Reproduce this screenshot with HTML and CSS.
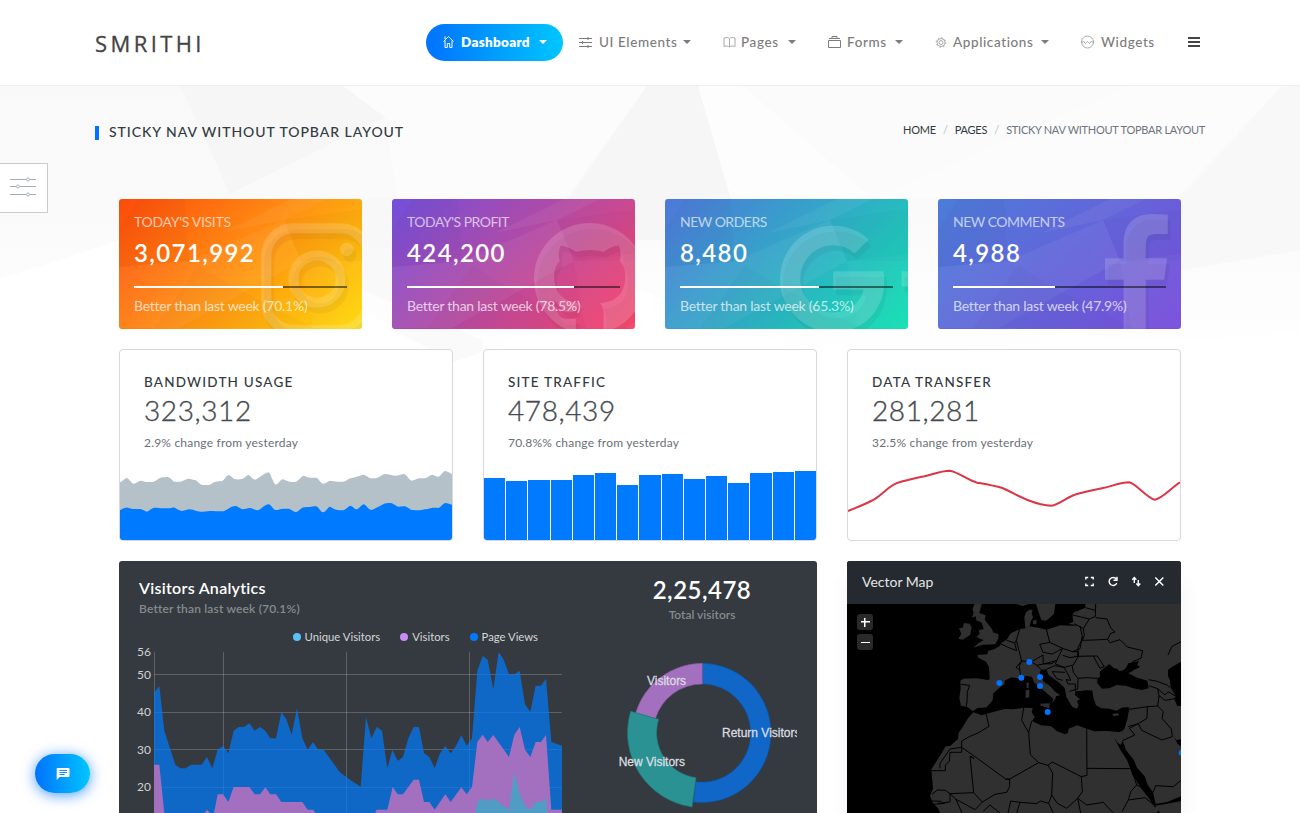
FILE: index.html
```html
<!DOCTYPE html>
<html lang="en">
<head>
<meta charset="utf-8">
<title>Smrithi Dashboard</title>
<link rel="stylesheet" href="styles.css">
</head>
<body>
<svg width="0" height="0" class="defs">
  <defs>
    <g id="facets">
      <path fill="#fff" fill-opacity=".05" d="M103 34L172 0H208L165 21ZM70 62L165 21L182 62L60 129H0V68Z"/>
      <path fill="#000" fill-opacity=".02" d="M0 30L20 0H66L70 62L0 68ZM165 21L243 10V62L182 62ZM35 129L80 66L110 85L195 129Z"/>
      <path fill="#fff" fill-opacity=".03" d="M182 62L243 55V129H193Z"/>
    </g>
    <path id="github" d="M896 128q209 0 385.500 103t279.500 279.500 103 385.500q0 251-146.500 451.500t-378.500 277.500q-27 5-40-7t-13-30q0-3 .5-76.500t.5-134.500q0-97-52-142 57-6 102.500-18t94-39 81-66.500 53-105 20.500-150.500q0-119-79-206 37-91-8-204-28-9-81 11t-92 44l-38 24q-93-26-192-26t-192 26q-16-11-42.500-27t-83.500-38.500-85-13.500q-45 113-8 204-79 87-79 206 0 85 20.500 150t52.500 105 80.500 67 94 39 102.500 18q-39 36-49 103-21 10-45 15t-57 5-65.500-21.500-55.500-62.500q-19-32-48.500-52t-49.500-24l-20-3q-21 0-29 4.500t-5 11.500 9 14 13 12l7 5q22 10 43.500 38t31.500 51l10 23q13 38 44 61.500t67 30 69.500 7 55.500-3.500l23-4q0 38 .5 88.500t.5 54.500q0 18-13 30t-40 7q-232-77-378.500-277.500t-146.500-451.500q0-209 103-385.500t279.500-279.500 385.500-103z"/>
    <path id="gplus" d="M1437 913q0 208-87 370.500t-248 254-369 91.500q-149 0-285-58t-234-156-156-234-58-285 58-285 156-234 234-156 285-58q286 0 491 192l-199 191q-117-113-292-113-123 0-227.500 62t-165.500 168.500-61 232.500 61 232.500 165.500 168.500 227.500 62q83 0 152.500-23t114.500-57.500 78.500-78.500 49-83 21.500-74h-416v-252h692q12 63 12 122zm867-122v210h-209v209h-210v-209h-209v-210h209v-209h210v209h209z"/>
    <path id="fb" d="M1343 12v264h-157q-86 0-116 36t-30 108v189h293l-39 296h-254v759h-306v-759h-255v-296h255v-218q0-186 104-288.500t277-102.500q147 0 228 12z"/>
    <g id="insta"><rect x="5" y="5" width="101.400" height="101.400" rx="27" fill="none" stroke="currentColor" stroke-width="10"/><circle cx="55.700" cy="55.700" r="23.600" fill="none" stroke="currentColor" stroke-width="10"/><circle cx="85.500" cy="26" r="6.800"/></g>
  </defs>
</svg>

<header class="topnav">
  <div class="wrap nav-row">
    <a class="brand">SMRITHI</a>
    <nav class="menu">
      <a class="item i-dash active"><svg class="ic" viewBox="0 0 12 14"><path d="M1 6.500L6 1.500L11 6.500M2.500 5.500V12.500H4.800V8.500H7.200V12.500H9.500V5.500M2.500 4V1.500"/></svg><span class="tx">Dashboard</span><i class="caret"></i></a>
      <a class="item i-ui"><svg class="ic" viewBox="0 0 13 14"><path d="M0 3.500H13M0 7.500H13M0 11.500H13M9 2V5M3.500 6V9M9 10V13"/></svg><span class="tx">UI Elements</span><i class="caret"></i></a>
      <a class="item i-pages"><svg class="ic thin" viewBox="0 0 12 14"><path d="M6 4V12M6 3.500C5 2.300 2 2.300.5 3V11.500C2 10.800 5 10.800 6 12C7 10.800 10 10.800 11.500 11.500V3C10 2.300 7 2.300 6 3.500"/></svg><span class="tx">Pages</span><i class="caret"></i></a>
      <a class="item i-forms"><svg class="ic" viewBox="0 0 13 14"><path d="M.5 5.500H12.500V12.500H.5ZM1 3.500H12M4 3V1.500H9V3"/></svg><span class="tx">Forms</span><i class="caret"></i></a>
      <a class="item i-apps"><svg class="ic thin" viewBox="0 0 12 14"><circle cx="5.500" cy="7.500" r="4"/><circle cx="5.500" cy="7.500" r="2"/><circle cx="5.500" cy="7.500" r="4.800" stroke-dasharray="1.500 2.270"/></svg><span class="tx">Applications</span><i class="caret"></i></a>
      <a class="item i-wid"><svg class="ic thin" viewBox="0 0 13 14"><circle cx="6.500" cy="7" r="6"/><path d="M.7 8L2.500 6L4.500 8.500L6.500 6.500L8.500 8.500L10.500 6L12.300 8"/></svg><span class="tx">Widgets</span></a>
      <a class="burger"><i></i><i></i><i></i></a>
    </nav>
  </div>
</header>

<main class="page">
  <svg class="backdrop" viewBox="0 86 1300 290" preserveAspectRatio="none">
    <defs><linearGradient id="fade" x1="0" y1="0" x2="0" y2="1"><stop offset="0" stop-color="#f9f9f9"/><stop offset=".45" stop-color="#fafafa"/><stop offset="1" stop-color="#fff"/></linearGradient></defs>
    <path fill="url(#fade)" d="M0 86H1300V334L1180 340L800 350L640 290L454 362L360 310L119 240L0 279Z"/>
    <path fill="#f6f6f6" d="M181 86H343L385 117L230 194Z"/>
    <path fill="#fcfcfc" d="M343 86H647L565 199H398L385 117Z"/>
    <path fill="#f6f6f6" d="M647 86H698L731 199L740 240H540Z"/>
    <path fill="#fdfdfd" d="M698 86H743L873 199H731Z"/>
    <path fill="#fbfbfb" d="M743 86H1130L873 199Z"/>
    <path fill="#fcfcfc" d="M1130 86H1282L1175 199H873Z"/>
    <path fill="#f8f8f8" d="M1282 86H1300V250L1181 270V199Z"/>
    <path fill="#f7f7f7" d="M362 199H392V329L453 362L483 352V340L362 290Z" fill-opacity=".6"/>
  </svg>

  <div class="wrap title-row">
    <h1 class="page-title">STICKY NAV WITHOUT TOPBAR LAYOUT</h1>
    <div class="crumbs"><a class="c1">HOME</a><span class="sl">/</span><a class="c2">PAGES</a><span class="sl">/</span><span class="c3">STICKY NAV WITHOUT TOPBAR LAYOUT</span></div>
  </div>

  <div class="content">
    <section class="row tiles">
      <article class="tile t1">
        <svg class="art" viewBox="0 0 243 130"><use href="#facets"/><g transform="translate(142.300 24.300)"><use href="#insta" transform="translate(3 6)" class="sh"/><use href="#insta" class="hi"/></g></svg>
        <h2>TODAY'S VISITS</h2><strong>3,071,992</strong>
        <div class="bar"><i style="width:70.1%"></i></div><p>Better than last week (70.1%)</p>
      </article>
      <article class="tile t2">
        <svg class="art" viewBox="0 0 243 130"><use href="#facets"/><g transform="translate(132.700 14.700) scale(.07254)"><use href="#github" transform="translate(40 80)" class="sh"/><use href="#github" class="hi"/></g></svg>
        <h2>TODAY'S PROFIT</h2><strong>424,200</strong>
        <div class="bar"><i style="width:78.5%"></i></div><p>Better than last week (78.5%)</p>
      </article>
      <article class="tile t3">
        <svg class="art" viewBox="0 0 243 130"><use href="#facets"/><g transform="translate(115 14.900) scale(.07254)"><use href="#gplus" transform="translate(40 80)" class="sh"/><use href="#gplus" class="hi"/></g></svg>
        <h2>NEW ORDERS</h2><strong>8,480</strong>
        <div class="bar"><i style="width:65.3%"></i></div><p>Better than last week (65.3%)</p>
      </article>
      <article class="tile t4">
        <svg class="art" viewBox="0 0 243 130"><use href="#facets"/><g transform="translate(132.300 15) scale(.07254)"><use href="#fb" transform="translate(40 80)" class="sh"/><use href="#fb" class="hi"/></g></svg>
        <h2>NEW COMMENTS</h2><strong>4,988</strong>
        <div class="bar"><i style="width:47.9%"></i></div><p>Better than last week (47.9%)</p>
      </article>
    </section>

    <section class="row cards">
      <article class="card">
        <h3>BANDWIDTH USAGE</h3><b>323,312</b><p>2.9% change from yesterday</p>
        <svg class="spark" viewBox="30 384 999 216" preserveAspectRatio="none">
          <path fill="#b4c1c9" d="M30 427C40 422 45 414 51 414C58 416 64 431 71 431C80 430 85 422 92 422C100 422 105 426 112 426H130C142 422 148 412 160 412C168 412 168 411 174 411C184 414 188 424 195 425H213C222 422 230 416 236 416C246 417 250 420 257 420C266 426 270 434 277 435H298C306 432 310 426 318 425C326 424 330 424 338 423C346 418 350 405 357 405C364 406 370 417 378 418C386 419 390 418 397 417C406 414 412 404 417 405C424 408 430 419 437 419C448 416 466 397 478 397C484 402 492 433 499 434C506 434 512 419 519 418C527 419 532 424 540 425C548 426 552 426 560 425C570 420 576 407 583 407C592 410 596 413 605 413H621C628 416 634 430 641 431C650 431 655 423 662 422C672 422 676 425 684 425H702C712 424 716 416 724 415C736 413 755 405 764 404C770 405 778 414 785 415H800C812 411 818 404 826 402C838 402 850 407 858 407C868 407 880 402 886 402C894 406 900 421 908 422C916 422 922 416 930 415H948C956 413 962 405 969 404C976 406 982 410 988 410C996 408 1002 393 1009 393C1016 394 1022 400 1029 402V600H30Z"/>
          <path fill="#007bff" d="M30 510C40 506 46 502 54 503C62 505 66 507 74 507H92C100 509 106 514 112 515C120 512 126 503 134 503C144 503 152 505 160 505H180C186 504 190 502 195 503C202 507 208 512 216 513C226 512 232 508 238 508C248 508 252 511 258 512C266 514 270 515 278 515C290 515 298 513 306 513C316 513 320 514 328 514H342C354 509 364 498 376 498C386 498 390 506 399 508C408 508 412 504 420 504C430 505 436 511 444 511C456 508 466 492 478 493C486 495 490 510 499 510C508 510 512 506 520 506H538C548 509 552 516 560 516C568 515 576 502 584 502C592 501 594 501 600 501C608 500 612 499 620 499C628 501 634 517 641 517C650 516 656 500 662 500C670 503 676 509 684 510C692 511 696 511 703 511C710 508 718 497 724 497C730 499 736 508 743 508C750 506 758 492 764 493C770 495 778 509 786 510C796 508 800 503 808 500C818 496 824 490 832 490C840 489 842 489 848 490C856 493 862 500 868 500C876 500 880 499 888 499C896 502 902 509 909 510C916 510 922 511 930 511C940 510 944 508 950 508C958 508 962 504 968 504C976 503 980 504 988 504C996 502 1002 490 1009 489C1016 489 1022 493 1029 494V600H30Z"/>
        </svg>
      </article>
      <article class="card">
        <h3>SITE TRAFFIC</h3><b>478,439</b><p>70.8%% change from yesterday</p>
        <div class="bars"><i style="height:61.7px"></i><i style="height:59px"></i><i style="height:60px"></i><i style="height:59.8px"></i><i style="height:65px"></i><i style="height:67.3px"></i><i style="height:54.6px"></i><i style="height:65px"></i><i style="height:66px"></i><i style="height:61px"></i><i style="height:63.6px"></i><i style="height:56.7px"></i><i style="height:67px"></i><i style="height:67.7px"></i><i style="height:69.5px"></i></div>
      </article>
      <article class="card">
        <h3>DATA TRANSFER</h3><b>281,281</b><p>32.5% change from yesterday</p>
        <svg class="spark" viewBox="823 384 725 216" preserveAspectRatio="none"><path class="redline" d="M823 513C842 502 862 492 878 480C900 462 916 432 935 427C955 420 970 414 990 409C1010 402 1028 392 1045 392C1062 394 1085 422 1105 428C1125 433 1142 437 1160 444C1178 454 1196 470 1215 480C1232 489 1252 497 1267 497C1285 495 1305 466 1325 461C1345 454 1362 449 1380 444C1400 438 1420 427 1437 427C1452 430 1478 478 1493 479C1510 476 1532 440 1548 427"/></svg>
      </article>
    </section>

    <section class="row panels">
      <article class="analytics">
        <div class="left">
          <h4>Visitors Analytics</h4><p class="sub">Better than last week (70.1%)</p>
          <div class="legend"><span class="l1">Unique Visitors</span><span class="l2">Visitors</span><span class="l3">Page Views</span></div>
          <div class="plot">
            <div class="ylab"><span>56</span><span>50</span><span>40</span><span>30</span><span>20</span></div>
            <svg class="area" viewBox="132 291 1224 483">
              <path class="grid" d="M133.500 291V774M340.500 291V774M709.500 291V774M1078.500 291V774M132 358.500H1356M132 472.500H1356M132 583.500H1356M132 697.500H1356"/>
              <path fill="#007bff" fill-opacity=".7" d="M132 774V414L148 393L163 527L180 580L196 629L211 640L227 640L243 629L275 629L291 606L307 640L323 584L339 573L355 595L371 527L386 516L402 516L418 505L434 527L450 516L466 527L481 550L498 550L514 472L529 493L545 539L561 460L577 550L593 584L609 561L625 584L641 584L689 651L720 674L752 695L768 486L784 550L800 516L816 527L832 640L847 584L863 617L879 606L895 550L911 516L927 516L942 595L958 606L974 640L990 595L1006 573L1022 595L1038 573L1054 540L1070 572L1086 550L1102 347L1118 303L1133 314L1150 403L1166 291L1181 314L1197 358L1213 358L1229 348L1245 448L1261 470L1277 392L1293 392L1308 371L1324 561L1356 572V774Z"/>
              <path fill="#a370c0" d="M132 774V629H148L163 774ZM283 774L291 764L300 774H312L323 718H339L355 741L371 696H418L434 718H450L466 697L481 718H498L514 741H577L593 764H609L617 774ZM795 774L800 764H832L848 696L863 718H879L911 674H927L942 741H958L974 764L1006 718L1022 741L1054 697L1070 718L1086 696L1102 561L1118 539L1133 561L1150 540L1197 606L1213 539L1229 516L1245 584L1261 606L1277 561H1293L1308 540L1324 764H1356V774Z"/>
              <path fill="#4f9dc4" d="M1096 774L1102 741L1118 730L1133 739L1150 730L1197 764L1213 652L1229 718L1245 752L1261 764L1277 741H1293L1308 730L1312 774Z"/>
            </svg>
          </div>
        </div>
        <div class="right">
          <strong>2,25,478</strong><p>Total visitors</p>
          <svg class="donut" viewBox="81 306 540 468">
            <path fill="#1067c7" stroke="#0b52a0" stroke-width="2" d="M337 325A207 209 0 0 1 543 534A207 209 0 0 1 310 741L317 680A146 147 0 0 0 482 534A146 147 0 0 0 337 387Z"/>
            <path fill="#a370c0" stroke="#84599c" stroke-width="2" d="M337 325A209 209 0 0 0 137 474L196 491A147 147 0 0 1 337 387Z"/>
            <path fill="#2a9293" stroke="#217777" stroke-width="2" d="M122 469A225 225 0 0 0 306 756L318 668A136 136 0 0 1 206 493Z"/>
            <g class="dl"><text x="396" y="545">Return Visitors</text><text x="171" y="389">Visitors</text><text x="86" y="632">New Visitors</text></g>
          </svg>
        </div>
      </article>

      <article class="map">
        <header><h4>Vector Map</h4>
          <svg viewBox="0 0 82 12"><path d="M.8 3.500V1.500H3.200M5.800 1.500H8.200V3.500M8.200 7.500V9.500H5.800M3.200 9.500H.8V7.500"/><path d="M31.300 3A4 4 0 1 0 31.800 7M32 .8V4.300H28.500"/><path d="M49.300 7V1.800M47.300 3.700L49.300 1.500L51.300 3.700M53.300 4V9.500M51.300 7.500L53.300 9.700L55.300 7.500"/><path stroke-width="1.500" d="M70.300 1.500L78.300 9.500M78.300 1.500L70.300 9.500"/></svg>
        </header>
        <div class="world">
          <svg viewBox="21 147 1002 627">
            <g class="land">
              <path d="M404 147L397 163L401 172L396 188L407 184L409 196L425 203L431 222L416 226L419 236L409 246L422 252L431 255L416 264L400 278L428 269L466 268L475 250L476 238L459 232L456 222L434 194L437 181L418 174L424 151V147Z"/>
              <path d="M372 204L389 206L395 218L390 240L368 254L355 251L364 236L357 220L368 218Z"/>
              <path d="M529 147L548 153L565 147ZM588 147L596 172L604 195L618 197L632 186L642 177L646 147Z"/>
              <path d="M568 164L578 164L575 178L580 186L573 197L569 214L556 220L553 186L558 172ZM578 197L590 194L589 208L580 208Z"/>
              <path d="M736 147V158L722 164L702 172L697 180L700 200L686 207L719 211L697 212L660 211L620 224L598 219L568 214L556 220L540 222L513 234L500 254L484 264L480 272L464 282L444 288L442 298L412 300L415 308L438 320L447 336L449 372L445 375L408 370L370 371L361 377L362 400L358 430L363 452L383 457L398 468L413 459L440 457L458 436L460 415L484 394L494 388L493 377L515 367L540 371L559 362L576 366L582 382L600 397L622 416L640 431L636 445L646 432L648 424L661 420L646 411L631 394L611 380L599 355L603 344L619 343L626 360L660 385L674 399L679 426L697 456L711 461L716 450L711 438L720 433L705 420L706 409L721 408L740 406L757 407L760 428L768 451L784 460L808 461L829 467L848 457L868 457L862 492L853 522L847 528L837 531L800 528L764 529L740 521L712 511L686 521L684 533L675 538L650 528L633 514L603 511L576 498L584 486L575 471L578 459L551 458L520 463L494 462L440 476L425 481L400 472L385 488L368 516L356 533L354 552L330 573L317 574L300 602L274 643L277 675L279 700L270 722L277 742L294 760L300 774H950L960 760L944 757L929 733L902 698L878 660L862 617L841 584L822 547L833 563L842 570L848 557L858 585L881 614L891 638L915 665L923 690L939 712L947 747L982 741L1023 724V574L1013 567L1001 541L1006 556L1023 553V453L1012 453L1002 430L1008 424L992 398L990 376L984 363L984 345L997 335L1023 320V147ZM865 325L877 322L897 318L891 330L901 336L887 343L870 347L860 352L888 367L922 377L926 400L905 405L880 400L857 392L830 390L808 400L786 401L772 385L772 370L780 366L779 350L794 338L808 327L822 340L832 341L838 349L856 344Z" fill-rule="evenodd"/>
              <path d="M600 446L629 445L628 460L603 452ZM557 406L568 404V427L557 429ZM559 384L566 382V399L560 399Z"/>
              <path d="M728 480L748 481ZM816 477L833 475L838 481L822 484ZM1023 738L982 746L945 752L960 774H1023Z"/>
              <path class="sea" d="M844 351L871 327L888 331L879 348L863 355ZM721 408L757 407L754 426L757 440L765 458L740 462L724 444L731 430L719 420Z"/>
            </g>
            <path class="borders" d="M539 222L529 256L537 287L545 318L538 332L542 366M480 265L504 277L530 287M500 256L524 264L529 256M530 287L524 264M618 218L629 262L599 268L609 292L637 297L668 280L629 262M545 318L575 320L590 331L610 327L609 300L575 320M545 318L528 337L540 345M610 327L650 317L668 280L697 290L720 281L727 245L720 213M697 290L714 290L712 304L690 308L668 301M650 317L646 327L672 337L700 330L714 306L712 304M610 327L637 326L646 317M590 331L605 345M619 343L644 332L672 337L684 358L692 376L678 374L684 387L706 387L706 408M637 350L675 352M637 350L650 371L668 376M697 333L700 352L714 370L740 368L772 370M714 370L713 402L688 409M712 304L760 303L780 340L793 335L772 303L760 303M727 245L724 258L714 278L716 306M698 180L748 192L766 184L767 147M736 158L766 166M703 206L730 221L748 192M730 221L733 242L727 256L760 255L803 253L812 235L825 231L813 220L801 192L767 188M803 253L810 263L840 254L862 276L908 287L903 310L877 320M984 300L995 275L1023 260M926 374L952 379L983 391L990 398M926 392L953 401L957 422L953 453L922 455L868 463L862 474M953 401L975 420L984 410L1008 424M957 422L975 436L1008 430M953 453L970 470L966 490L994 522L997 545M922 455L921 490L895 506L864 515M895 506L905 526L966 555L997 545M895 506L868 520L884 540L848 557M363 388L389 391L382 410L381 440L378 456M551 458L545 496L566 533L571 599L596 623L509 672L497 672L412 610L365 577V558L388 545L416 533L447 514L438 476M575 498L566 533M596 623L624 631L637 621L724 665L741 661L740 521M740 640L874 641M624 631L638 654L635 720L626 745L601 738L590 746L540 742L512 738L504 774M509 672V695L500 712L465 718L427 741L405 764M497 672L509 674M365 577V592L330 592L328 619L316 630V647H274M365 577L330 582L300 625L300 640M390 604L402 610L390 604L401 713L330 716L316 706L292 705L276 718M330 716L330 741L294 745M330 716L348 733L366 774M724 665L727 710L713 730L722 774M635 720L652 745L680 760L713 730M713 730L740 750L790 742L820 774M874 641L890 690L872 710L865 735L846 770M890 690L920 704L944 745M865 735L915 728L944 752M939 712L947 692L1000 695L1023 676M401 713L427 741M348 733L405 764M540 742L530 774M626 745L640 774M276 738L305 739M280 748L315 745M430 768L450 750L480 774"/>
            <g class="pins"><circle cx="568" cy="321" r="9"/><circle cx="478" cy="384" r="9"/><circle cx="544" cy="368" r="9"/><circle cx="600" cy="366" r="9"/><circle cx="600" cy="393" r="9"/><circle cx="623" cy="471" r="9"/><circle cx="1025" cy="593" r="9"/></g>
          </svg>
          <div class="zoomer"><i class="plus"></i><i></i></div>
        </div>
      </article>
    </section>
  </div>
</main>

<a class="settings"><svg viewBox="0 0 26 20"><path d="M0 2.500H16M20 2.500H26M0 9.500H6M10 9.500H26M0 17.500H16M20 17.500H26"/><circle cx="18" cy="2.500" r="1.500"/><circle cx="8" cy="9.500" r="1.500"/><circle cx="18" cy="17.500" r="1.500"/></svg></a>
<a class="chat"><svg viewBox="0 0 14 14"><path fill="#fff" d="M1.500 1H12.500Q13.500 1 13.500 2V9Q13.500 10 12.500 10H3.500L.7 13V2Q.7 1 1.500 1Z"/><path stroke="#0a90ff" d="M3.500 3.500H11M3.500 5.500H11M3.500 7.500H8.500"/></svg></a>
</body>
</html>
```
FILE: styles.css
```css
* { box-sizing: border-box; }
html, body { height: 100%; }
body {
  margin: 0;
  overflow: hidden;
  background: #fff;
  color: #343a40;
  font: 14px/20px Lato, "Open Sans", sans-serif;
}
h1, h2, h3, h4, p { margin: 0; }
.defs { position: absolute; }
.wrap { width: 1110px; margin: 0 auto; }

/* top navigation */
.topnav { height: 86px; border-bottom: 1px solid #efefef; background: #fff; }
.nav-row { display: flex; justify-content: space-between; align-items: flex-start; }
.brand { padding-top: 30px; font: 22px/26px "Open Sans", sans-serif; letter-spacing: 3.4px; color: #444; -webkit-text-stroke: .3px #444; }
.menu { display: flex; padding-top: 24px; }
.item {
  display: flex;
  align-items: center;
  height: 37px;
  padding: 0 16px 1px;
  color: #7c7c7c;
  font-size: 13.5px;
  font-weight: 500;
  letter-spacing: .6px;
}
.item .tx { flex: 1; white-space: nowrap; }
.ic { width: 13px; height: 14px; margin-right: 6px; fill: none; stroke: currentColor; stroke-width: 1; flex: none; }
.ic.thin { stroke-width: .8; opacity: .8; }
.caret { border: 4px solid transparent; border-top-color: currentColor; border-bottom: 0; margin-top: -1px; }
.active { border-radius: 19px; background: linear-gradient(90deg, #0072ff, #00c6ff); color: #fff; font-weight: 800; letter-spacing: .3px; }
.i-dash { width: 137px; }
.i-ui { width: 144px; }
.i-ui .ic { margin-right: 7px; }
.i-pages { width: 105px; }
.i-pages .ic { margin-right: 5px; }
.i-forms { width: 107px; }
.i-apps { width: 146px; }
.i-apps .ic { margin-right: 5px; }
.i-wid { width: 107px; }
.i-wid .ic { margin-right: 7px; }
.burger { width: 33px; padding: 13px 5px 0 16px; display: flex; flex-direction: column; gap: 2px; }
.burger i { height: 2px; background: #444; }

/* page head */
.page { position: relative; height: 727px; overflow: hidden; }
.backdrop { position: absolute; left: 0; top: 0; width: 100%; height: 290px; }
.title-row { position: relative; display: flex; justify-content: space-between; padding-top: 34px; height: 113px; }
.page-title { position: relative; margin-top: 6px; height: 14px; padding-left: 10px; border-left: 4px solid #0072ff; font-size: 14px; line-height: 12px; font-weight: 500; letter-spacing: .95px; }
.crumbs { display: flex; font-size: 11px; line-height: 20px; letter-spacing: -.26px; color: #6c757d; }
.crumbs a { color: #343a40; }
.crumbs .sl { width: 19px; text-align: center; color: #b9bfc5; }

/* rows */
.content { position: relative; width: 1062px; margin: 0 auto; display: flex; flex-direction: column; gap: 20px; }
.row { display: flex; gap: 30px; }

/* gradient tiles */
.tile { position: relative; width: 243px; height: 130px; padding: 13px 15px 0; border-radius: 3px; overflow: hidden; color: #fff; }
.t1 { background: linear-gradient(135deg, #fc4a0b, #ff8a12 45%, #fdda0d); }
.t2 { background: linear-gradient(135deg, #724fdb, #fb4568); }
.t3 { background: linear-gradient(135deg, #4f77da, #12e0b2); }
.t4 { background: linear-gradient(135deg, #4c7cd9, #7a4edb); }
.art { position: absolute; left: 0; top: 0; width: 243px; height: 130px; }
.sh { color: #000; fill: #000; opacity: .045; }
.hi { color: #fff; fill: #fff; opacity: .16; }
.tile h2, .tile strong, .tile .bar, .tile p { position: relative; display: block; }
.tile h2 { font-size: 14px; line-height: 20px; font-weight: 400; opacity: .65; letter-spacing: -.5px; }
.t1 h2 { letter-spacing: -.3px; }
.tile strong { margin-top: 5px; font-size: 24px; line-height: 31px; font-weight: 600; letter-spacing: 1.4px; }
.bar { height: 2px; margin-top: 18px; background: rgba(0, 0, 0, .5); }
.bar i { display: block; height: 2px; background: #fff; }
.tile p { margin-top: 8px; font-size: 14px; line-height: 20px; letter-spacing: -.25px; opacity: .7; white-space: nowrap; }

/* white cards */
.card { width: 334px; height: 192px; border: 1px solid #dcd5d9; border-radius: 4px; background: #fff; overflow: hidden; display: flex; flex-direction: column; }
.card h3 { margin: 23px 24px 0; font-size: 13.5px; line-height: 18px; font-weight: 500; letter-spacing: 1.2px; }
.card b { margin: 2px 24px 0; font-size: 28px; line-height: 34px; font-weight: 300; letter-spacing: .6px; color: #454a4f; -webkit-text-stroke: .35px #454a4f; }
.card p { margin: 6px 24px 0; font-size: 12px; line-height: 20px; letter-spacing: .2px; color: #6a6f74; }
.spark { display: block; width: 332px; height: 72px; margin-top: auto; overflow: visible; }
.redline { fill: none; stroke: #dc3545; stroke-width: 2; vector-effect: non-scaling-stroke; }
.bars { display: flex; align-items: flex-end; gap: 1px; margin-top: auto; height: 72px; }
.bars i { flex: 1; background: #007bff; }

/* analytics */
.analytics { display: flex; width: 698px; height: 270px; padding: 0 20px; border-radius: 3px 3px 0 0; background: #343a40; color: #fff; }
.left { width: 423px; padding-top: 16px; }
.left h4 { font-size: 16px; line-height: 22px; font-weight: 600; letter-spacing: .28px; }
.sub, .right p { font-size: 12px; line-height: 20px; color: #868a8e; font-weight: 600; }
.sub { letter-spacing: .17px; }
.legend { display: flex; justify-content: flex-end; gap: 20px; padding: 8px 24px 0 0; font-size: 11.300px; line-height: 20px; color: #d5d6d8; }
.legend span::before { content: ""; display: inline-block; width: 8px; height: 8px; margin-right: 4px; border-radius: 50%; background: #5bc0f8; }
.legend .l2::before { background: #c98bf8; }
.legend .l3::before { background: #007bff; }
.plot { display: flex; padding-top: 5px; }
.ylab { width: 15px; display: flex; flex-direction: column; align-items: flex-end; padding-right: 3px; margin-top: -10px; font-size: 12px; line-height: 20px; color: #d0d1d3; }
.ylab span { height: 37.500px; flex: none; }
.ylab span:first-child { height: 22.500px; }
.area { width: 408px; height: 161px; }
.grid { fill: none; stroke: rgba(255, 255, 255, .2); stroke-width: 3; }
.right { flex: 1; padding: 14px 0 0 45px; text-align: center; }
.right strong { display: block; font-size: 24px; line-height: 30px; font-weight: 600; letter-spacing: .5px; }
.donut { display: block; width: 180px; height: 156px; margin: 32px 0 0 10px; overflow: hidden; }
.right strong, .right p { width: 190px; }
.dl text { font: 36px "Liberation Sans", Arial, sans-serif; fill: #dcdde0; stroke: #dcdde0; stroke-width: .8; }

/* map */
.map { width: 334px; height: 252px; border-radius: 3px 3px 0 0; overflow: hidden; background: #000; box-shadow: 0 20px 20px rgba(60, 80, 140, .08); }
.map header { display: flex; align-items: center; justify-content: space-between; height: 43px; padding: 0 15px 1px; background: #252a30; color: #e4e5e6; }
.map h4 { font-size: 14px; font-weight: 400; letter-spacing: 0; }
.map header svg { width: 82px; height: 12px; margin-right: -1px; fill: none; stroke: #fff; stroke-width: 1.400; }
.world { position: relative; height: 209px; }
.world > svg { display: block; width: 334px; height: 209px; }
.land { fill: #303030; }
.land .sea { fill: #000; }
.borders { fill: none; stroke: #000; stroke-width: 3; stroke-linejoin: round; }
.pins { fill: #0072ff; }
.zoomer { position: absolute; left: 10px; top: 10px; display: grid; gap: 4px; }
.zoomer i { position: relative; width: 16px; height: 16px; border-radius: 3px; background: linear-gradient(#fff, #fff) center / 9px 1px no-repeat #292929; }
.zoomer .plus { background: linear-gradient(#fff, #fff) center / 9px 1.500px no-repeat, linear-gradient(#fff, #fff) center / 1.500px 9px no-repeat #292929; }

/* floating controls */
.settings { position: absolute; left: -1px; top: 163px; width: 49px; height: 50px; display: grid; place-items: center; border: 1px solid #ccc; background: #fff; }
.settings svg { width: 26px; height: 20px; margin: 0 2px 2px 0; fill: none; stroke: #a4adb5; }
.chat { position: absolute; left: 35px; top: 754px; width: 55px; height: 39px; display: grid; place-items: center; border-radius: 20px; background: linear-gradient(90deg, #0072ff, #00c6ff); box-shadow: 0 2px 14px rgba(0, 114, 255, .7); }
.chat svg { width: 14px; height: 14px; }
```
